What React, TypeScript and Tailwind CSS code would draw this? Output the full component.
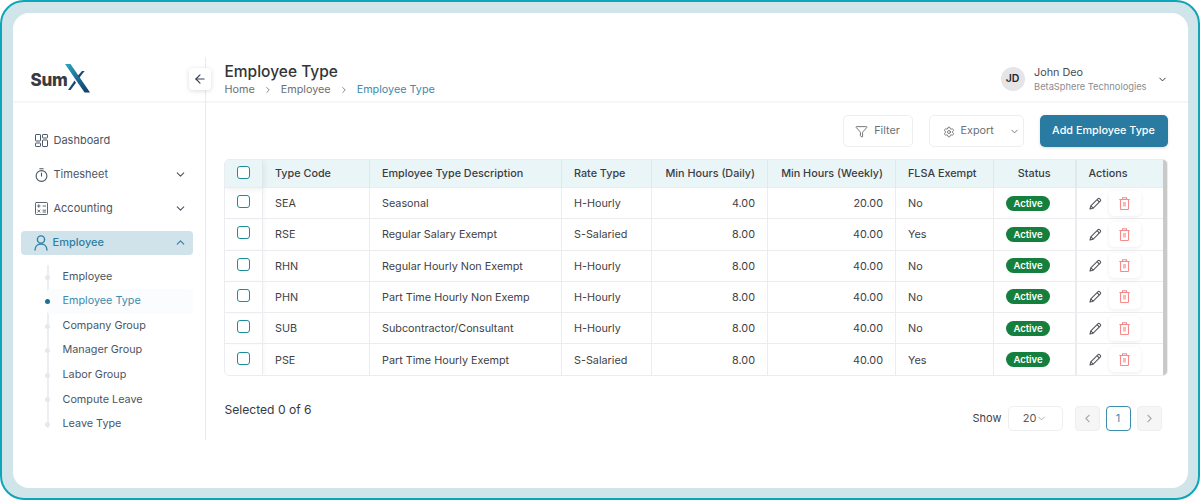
import { ChevronDown, ChevronLeft, ChevronRight, ChevronUp, ArrowLeft, Funnel, Settings } from "lucide-react";
import type { ReactNode } from "react";

const ROWS = [
  { code: "SEA", description: "Seasonal", rate: "H-Hourly", daily: "4.00", weekly: "20.00", exempt: "No" },
  { code: "RSE", description: "Regular Salary Exempt", rate: "S-Salaried", daily: "8.00", weekly: "40.00", exempt: "Yes" },
  { code: "RHN", description: "Regular Hourly Non Exempt", rate: "H-Hourly", daily: "8.00", weekly: "40.00", exempt: "No" },
  { code: "PHN", description: "Part Time Hourly Non Exemp", rate: "H-Hourly", daily: "8.00", weekly: "40.00", exempt: "No" },
  { code: "SUB", description: "Subcontractor/Consultant", rate: "H-Hourly", daily: "8.00", weekly: "40.00", exempt: "No" },
  { code: "PSE", description: "Part Time Hourly Exempt", rate: "S-Salaried", daily: "8.00", weekly: "40.00", exempt: "Yes" },
];

const SUB_ITEMS = ["Employee", "Employee Type", "Company Group", "Manager Group", "Labor Group", "Compute Leave", "Leave Type"];

function Checkbox() {
  return <span className="block h-[13px] w-[13px] rounded-[3px] border-[1.5px] border-[#1f8a9c] bg-white" />;
}

function Logo() {
  return (
    <div className="flex items-end">
      <span className="pb-[4px] text-[17px] font-extrabold leading-none tracking-[-0.2px] text-[#3a3b40]">Sum</span>
      <svg width="25" height="29" viewBox="0 0 25 29" className="-ml-[3px]">
        <defs>
          <linearGradient id="logo-x" x1="0" y1="0" x2="1" y2="1">
            <stop offset="0" stopColor="#2fa8bd" />
            <stop offset="0.5" stopColor="#1b6d94" />
            <stop offset="1" stopColor="#123a63" />
          </linearGradient>
        </defs>
        <path d="M0 0h5.5L25 28.5h-5.5z" fill="url(#logo-x)" />
        <path d="M17 7h2.6l-5.4 7-1.4-2.2z" fill="#1a4a74" />
        <path d="M9.6 16.5l1.4 2.2L5.6 26H3z" fill="#1a4a74" />
      </svg>
    </div>
  );
}

function DashboardIcon() {
  return (
    <svg width="13" height="13" viewBox="0 0 13 13" fill="none" stroke="currentColor" strokeWidth="1">
      <rect x="0.5" y="0.5" width="5" height="6.5" rx="0.6" />
      <rect x="7.5" y="0.5" width="5" height="3.5" rx="0.6" />
      <rect x="0.5" y="9" width="5" height="3.5" rx="0.6" />
      <rect x="7.5" y="6" width="5" height="6.5" rx="0.6" />
    </svg>
  );
}

function StopwatchIcon() {
  return (
    <svg width="13" height="14" viewBox="0 0 13 14" fill="none" stroke="currentColor" strokeWidth="1.1" strokeLinecap="round">
      <circle cx="6.5" cy="8" r="5.4" />
      <path d="M4.8 0.7h3.4M6.5 8V5" />
    </svg>
  );
}

function CalculatorIcon() {
  return (
    <svg width="13" height="13" viewBox="0 0 13 13" fill="none" stroke="currentColor" strokeWidth="0.9" strokeLinecap="round">
      <rect x="0.5" y="0.5" width="12" height="12" rx="0.8" />
      <path d="M2.5 4h2.6M3.8 2.7v2.6M8 4h2.6M2.7 8l2.2 2.2M4.9 8l-2.2 2.2M8 8.2h2.6M8 10h2.6" />
    </svg>
  );
}

function PersonIcon() {
  return (
    <svg width="14" height="16" viewBox="0 0 14 16" fill="none" stroke="currentColor" strokeWidth="1.4" strokeLinecap="round">
      <circle cx="7" cy="4.5" r="3.6" />
      <path d="M1 15c0-3.6 2.6-6 6-6s6 2.4 6 6" />
    </svg>
  );
}

function PencilIcon() {
  return (
    <svg width="13" height="13" viewBox="0 0 13 13" fill="none" stroke="#55585e" strokeWidth="1.1" strokeLinejoin="round">
      <path d="M1 12l.8-3.2 7-7c.6-.6 1.5-.6 2 0l.4.4c.6.6.6 1.5 0 2l-7 7z" />
      <path d="M8 2.6l2.4 2.4M1.8 8.8l2.4 2.4" />
    </svg>
  );
}

function BinIcon() {
  return (
    <svg width="11" height="13" viewBox="0 0 11 13" fill="none" stroke="#f58a8a" strokeWidth="1.1">
      <path d="M0.3 2.5h10.4M3.5 2.5V0.8h4v1.7" />
      <path d="M1.5 2.5v9.2c0 .5.3.8.8.8h6.4c.5 0 .8-.3.8-.8V2.5" />
      <rect x="4" y="5" width="3" height="4.5" fill="#f9b9b9" stroke="none" />
    </svg>
  );
}

function NavItem({ icon, label, chevron }: { icon: ReactNode; label: string; chevron?: boolean }) {
  return (
    <div className="flex h-[24px] items-center gap-[6px] pl-[22px] pr-[18px] text-[#4b5563]">
      <span className="flex w-[13px] justify-center">{icon}</span>
      <span className="flex-1 text-[11px]">{label}</span>
      {chevron ? <ChevronDown size={13} /> : null}
    </div>
  );
}

function Sidebar() {
  return (
    <aside className="flex h-[383px] w-[193px] shrink-0 flex-col border-r border-[#e8eaee]">
      <div className="relative flex h-[46px] shrink-0 items-center border-b-2 border-[#f5f6f8] pl-[18px]">
        <Logo />
        <button className="absolute left-[176px] top-[11px] z-10 flex h-[22px] w-[22px] items-center justify-center rounded-[4px] bg-white text-[#374151] shadow-[0_1px_5px_rgba(0,0,0,0.14)]">
          <ArrowLeft size={14} />
        </button>
      </div>
      <nav className="flex flex-col gap-[10px] pt-[26px]">
        <NavItem label="Dashboard" icon={<DashboardIcon />} />
        <NavItem label="Timesheet" chevron icon={<StopwatchIcon />} />
        <NavItem label="Accounting" chevron icon={<CalculatorIcon />} />
        <div className="ml-[8px] mr-[12px] flex h-[24px] items-center gap-[5px] rounded-[4px] bg-[#d0e3ea] pl-[13px] pr-[6px] text-[#2f7fa3]">
          <PersonIcon />
          <span className="flex-1 text-[11px] font-medium">Employee</span>
          <ChevronUp size={13} />
        </div>
      </nav>
      <div className="relative ml-[34px] mt-[10px] flex flex-col">
        <span className="absolute bottom-[9px] left-0 top-0 w-[2px] bg-[#eceef3]" />
        {SUB_ITEMS.map((item) => (
          <div key={item} className={`relative flex h-[24.6px] items-center pl-[16px] text-[10.8px] ${item === "Employee Type" ? "mr-[12px] rounded-[3px] bg-[#fbfcfd] text-[#3d8bad]" : "text-[#4b5563]"}`}>
            <span className={`absolute -left-[1.5px] top-[10px] h-[5px] w-[5px] rounded-full ${item === "Employee Type" ? "bg-[#1f6f94]" : "bg-[#e6e8ee]"}`} />
            {item}
          </div>
        ))}
      </div>
    </aside>
  );
}

function Topbar() {
  return (
    <header className="flex h-[46px] shrink-0 items-start justify-between border-b-2 border-[#f5f6f8] pl-[19px] pr-[20px]">
      <div className="pt-[5px]">
        <h1 className="text-[15.5px] font-medium leading-[20px] text-[#333436]">Employee Type</h1>
        <div className="flex items-center text-[10.8px] leading-[16px] text-[#6b6f76]">
          <span>Home</span>
          <ChevronRight size={10} className="mx-[8px] text-[#6b7280]" />
          <span>Employee</span>
          <ChevronRight size={10} className="mx-[8px] text-[#6b7280]" />
          <span className="text-[#3d8bad]">Employee Type</span>
        </div>
      </div>
      <div className="flex items-center pt-[9px]">
        <span className="flex h-[24px] w-[24px] items-center justify-center rounded-full bg-[#e5e5e7] text-[10.5px] font-semibold text-[#27272a]">JD</span>
        <div className="ml-[9.5px] flex flex-col">
          <span className="text-[10.8px] leading-[14px] text-[#4b4b4f]">John Deo</span>
          <span className="text-[9.3px] leading-[13px] text-[#8a8d93]">BetaSphere Technologies</span>
        </div>
        <ChevronDown size={11} className="ml-[10px] text-[#27272a]" />
      </div>
    </header>
  );
}

function Toolbar() {
  return (
    <div className="flex justify-end gap-[16px] pr-[20px] pt-[12px]">
      <button className="flex h-[32px] w-[70px] items-center justify-center gap-[6px] rounded-[5px] border border-[#eceef0] bg-white pt-[2px] text-[10.8px] text-[#6b6f76]">
        <Funnel size={13} strokeWidth={1.5} className="text-[#55585e]" />
        Filter
      </button>
      <button className="flex h-[32px] w-[95px] items-center gap-[6px] rounded-[5px] border border-[#eceef0] bg-white pl-[13px] pt-[2px] text-[10.8px] text-[#6b6f76]">
        <Settings size={12} strokeWidth={1.5} className="text-[#55585e]" />
        Export
        <ChevronDown size={11} className="ml-[9px]" />
      </button>
      <button className="h-[32px] w-[128px] rounded-[5px] bg-[#2a7ba1] pt-[2px] text-[10.8px] font-medium text-white shadow-[0_1px_3px_rgba(0,0,0,0.15)]">
        Add Employee Type
      </button>
    </div>
  );
}

const TH = "h-[28px] whitespace-nowrap border-r border-[#dfe8ec] pt-[2px] text-[10.8px] font-medium text-[#3b3d42] px-[12px]";
const TD = "h-[31.25px] whitespace-nowrap border-t border-r border-[#eaecef] text-[10.8px] text-[#3f4146] px-[12px]";
const TEXT_TD = `${TD} pt-[2px]`;

function EmployeeTable() {
  return (
    <div className="relative mr-[20px] mt-[12px] overflow-hidden rounded-[5px] border border-[#eaecef]">
      <table className="w-full table-fixed border-collapse">
        <colgroup>
          <col className="w-[38px]" />
          <col className="w-[107px]" />
          <col className="w-[192px]" />
          <col className="w-[90px]" />
          <col className="w-[116px]" />
          <col className="w-[128px]" />
          <col className="w-[98px]" />
          <col className="w-[82px]" />
          <col />
        </colgroup>
        <thead className="bg-[#eaf5f8]">
          <tr>
            <th className={`${TH} pb-[3px] pl-[12px] shadow-[2px_2px_5px_rgba(0,0,0,0.06)]`}><Checkbox /></th>
            <th className={`${TH} text-left`}>Type Code</th>
            <th className={`${TH} text-left`}>Employee Type Description</th>
            <th className={`${TH} text-left`}>Rate Type</th>
            <th className={`${TH} text-right`}>Min Hours (Daily)</th>
            <th className={`${TH} text-right`}>Min Hours (Weekly)</th>
            <th className={`${TH} text-left`}>FLSA Exempt</th>
            <th className={`${TH} border-r-2 text-center`}>Status</th>
            <th className={`${TH} border-r-0 text-left`}>Actions</th>
          </tr>
        </thead>
        <tbody>
          {ROWS.map((row) => (
            <tr key={row.code}>
              <td className={`${TD} pb-[3px] pl-[12px] shadow-[2px_0_4px_rgba(0,0,0,0.03)]`}><Checkbox /></td>
              <td className={TEXT_TD}>{row.code}</td>
              <td className={TEXT_TD}>{row.description}</td>
              <td className={TEXT_TD}>{row.rate}</td>
              <td className={`${TEXT_TD} text-right`}>{row.daily}</td>
              <td className={`${TEXT_TD} text-right`}>{row.weekly}</td>
              <td className={TEXT_TD}>{row.exempt}</td>
              <td className={`${TD} border-r-2`}>
                <span className="block h-[15px] w-[44px] rounded-full bg-[#15803d] text-center text-[9.5px] font-semibold leading-[15px] text-white">Active</span>
              </td>
              <td className={`${TD} border-r-0`}>
                <div className="flex items-center gap-[7px]">
                  <PencilIcon />
                  <span className="flex h-[25px] w-[32px] items-center justify-center rounded-[5px] bg-white shadow-[0_1px_4px_rgba(0,0,0,0.07)]">
                    <BinIcon />
                  </span>
                </div>
              </td>
            </tr>
          ))}
        </tbody>
      </table>
      <span className="absolute bottom-0 right-0 top-0 w-[4px] bg-[#c9c9c9]" />
    </div>
  );
}

function Footer() {
  return (
    <div className="mr-[26px] mt-[22px] flex items-start justify-between pl-[1px]">
      <span className="pt-[3px] text-[12.1px] text-[#37393d]">Selected 0 of 6</span>
      <div className="flex items-center pt-[8px] text-[11px]">
        <span className="text-[#3f4146]">Show</span>
        <span className="ml-[6px] flex h-[25px] w-[55px] items-center justify-center rounded-[5px] border border-[#eceef0] text-[#55585e]">
          20<ChevronDown size={11} className="text-[#9ca3af]" />
        </span>
        <span className="ml-[12px] flex h-[25px] w-[25px] items-center justify-center rounded-[4px] border border-[#eceef0] bg-[#f6f6f7] text-[#a8abb0]"><ChevronLeft size={13} /></span>
        <span className="ml-[6px] flex h-[25px] w-[25px] items-center justify-center rounded-[4px] border border-[#3d8bad] text-[#3d8bad]">1</span>
        <span className="ml-[6px] flex h-[25px] w-[25px] items-center justify-center rounded-[4px] border border-[#eceef0] bg-[#f6f6f7] text-[#a8abb0]"><ChevronRight size={13} /></span>
      </div>
    </div>
  );
}

export default function App() {
  return (
    <div className="h-[500px] w-[1200px] overflow-hidden rounded-[24px] border-2 border-[#0ea5b9] bg-[#cfe5e9] p-[10.5px] font-['Inter',sans-serif]">
      <div className="flex h-[475px] rounded-[16px] bg-white pt-[44px]">
        <Sidebar />
        <main className="flex min-w-0 flex-1 flex-col">
          <Topbar />
          <div className="pl-[18px]">
            <Toolbar />
            <EmployeeTable />
            <Footer />
          </div>
        </main>
      </div>
    </div>
  );
}
